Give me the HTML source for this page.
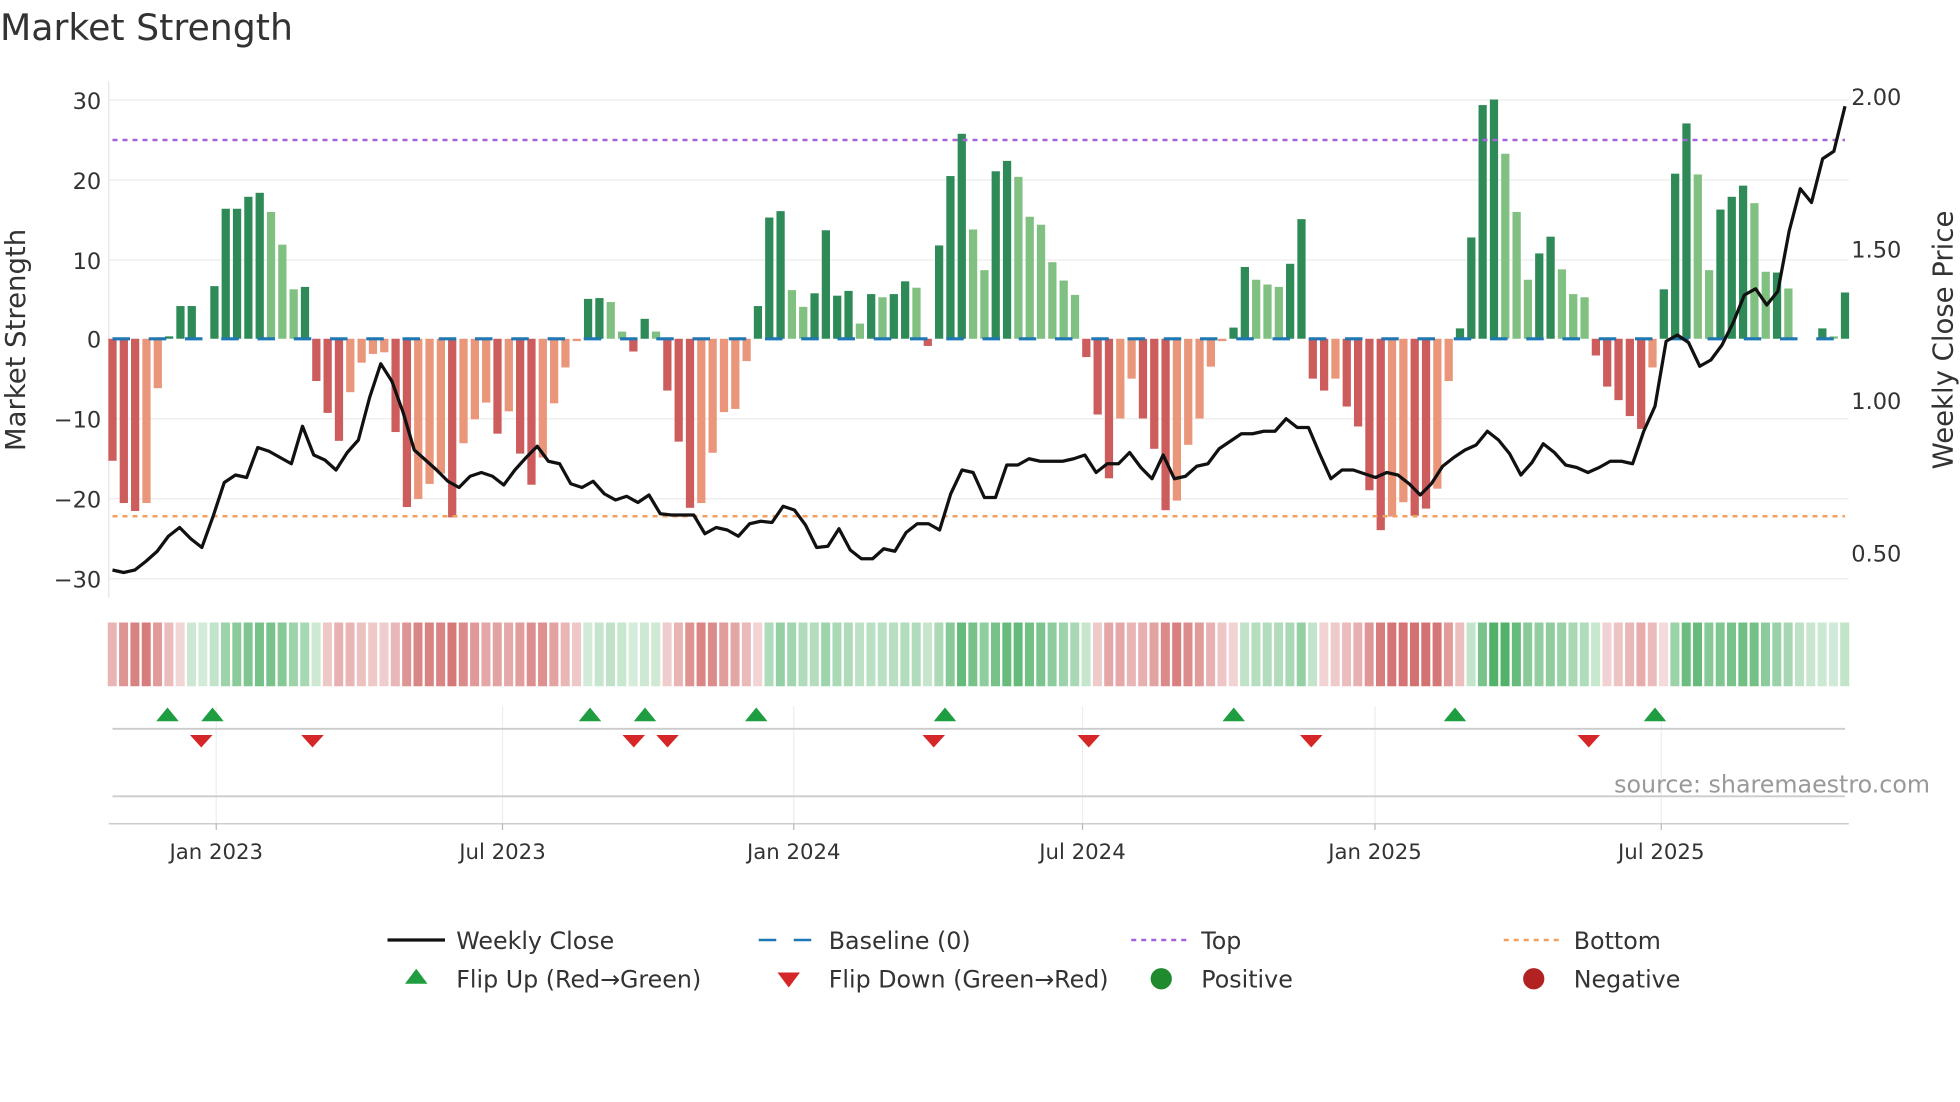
<!DOCTYPE html>
<html><head><meta charset="utf-8"><style>
html,body{margin:0;padding:0;background:#fff}
svg{display:block}
text{font-family:"DejaVu Sans","Liberation Sans",sans-serif;fill:#333}
</style></head><body>
<svg id="s" width="1960" height="1102" viewBox="0 0 1568 881.6" xmlns="http://www.w3.org/2000/svg">
<rect width="1568" height="882" fill="#fff"/>
<text x="0" y="32" font-size="29">Market Strength</text>
<g stroke="#ececec" stroke-width="1">
<line x1="87" y1="80" x2="1479" y2="80"/><line x1="87" y1="144" x2="1479" y2="144"/><line x1="87" y1="208" x2="1479" y2="208"/><line x1="87" y1="335" x2="1479" y2="335"/><line x1="87" y1="399" x2="1479" y2="399"/><line x1="87" y1="463" x2="1479" y2="463"/>
</g>
<line x1="87" y1="65" x2="87" y2="478" stroke="#e4e4e4"/>
<g font-size="18" text-anchor="end">
<text x="81" y="87">30</text><text x="81" y="151">20</text><text x="81" y="215">10</text><text x="81" y="278">0</text><text x="81" y="342">−10</text><text x="81" y="406">−20</text><text x="81" y="470">−30</text>
</g>
<g font-size="18">
<text x="1481" y="84">2.00</text><text x="1481" y="206">1.50</text><text x="1481" y="327">1.00</text><text x="1481" y="449">0.50</text>
</g>
<text transform="translate(20,272) rotate(-90)" font-size="22" text-anchor="middle">Market Strength</text>
<text transform="translate(1562,272) rotate(-90)" font-size="22" text-anchor="middle">Weekly Close Price</text>
<g id="bars"></g>
<line x1="90" y1="271" x2="1476" y2="271" stroke="#1f77b4" stroke-width="2.5" stroke-dasharray="14,15"/>
<line x1="90" y1="112" x2="1476" y2="112" stroke="#a463d8" stroke-width="2" stroke-dasharray="4,4"/>
<line x1="90" y1="413" x2="1476" y2="413" stroke="#f0a060" stroke-width="2" stroke-dasharray="4,4"/>
<polyline id="price" fill="none" stroke="#111" stroke-width="2.6" stroke-linejoin="round"/>
<g id="strip"></g>
<g stroke="#eee"><line x1="173" y1="565" x2="173" y2="660"/><line x1="402" y1="565" x2="402" y2="660"/><line x1="635" y1="565" x2="635" y2="660"/><line x1="866" y1="565" x2="866" y2="660"/><line x1="1100" y1="565" x2="1100" y2="660"/><line x1="1329" y1="565" x2="1329" y2="660"/></g>
<line x1="90" y1="583" x2="1476" y2="583" stroke="#ccc" stroke-width="1.5"/>
<line x1="90" y1="637" x2="1476" y2="637" stroke="#ccc" stroke-width="1.5"/>
<line x1="87" y1="659" x2="1479" y2="659" stroke="#ccc" stroke-width="1.2"/>
<g id="marks"></g>
<text x="1544" y="634" font-size="19" text-anchor="end" style="fill:#999">source: sharemaestro.com</text>
<g font-size="17" text-anchor="middle">
<text x="173" y="687">Jan 2023</text><text x="402" y="687">Jul 2023</text><text x="635" y="687">Jan 2024</text><text x="866" y="687">Jul 2024</text><text x="1100" y="687">Jan 2025</text><text x="1329" y="687">Jul 2025</text>
</g>
<g stroke="#bbb"><line x1="173" y1="659" x2="173" y2="664"/><line x1="402" y1="659" x2="402" y2="664"/><line x1="635" y1="659" x2="635" y2="664"/><line x1="866" y1="659" x2="866" y2="664"/><line x1="1100" y1="659" x2="1100" y2="664"/><line x1="1329" y1="659" x2="1329" y2="664"/></g>
<g font-size="19">
<line x1="310" y1="752" x2="356" y2="752" stroke="#111" stroke-width="2.6"/><text x="365" y="759">Weekly Close</text>
<line x1="607" y1="752" x2="651" y2="752" stroke="#1f77b4" stroke-width="2" stroke-dasharray="14,14"/><text x="663" y="759">Baseline (0)</text>
<line x1="905" y1="752" x2="949" y2="752" stroke="#a463d8" stroke-width="2" stroke-dasharray="4,4"/><text x="961" y="759">Top</text>
<line x1="1203" y1="752" x2="1247" y2="752" stroke="#f0a060" stroke-width="2" stroke-dasharray="4,4"/><text x="1259" y="759">Bottom</text>
<polygon points="333,775 342,787 324,787" fill="#1e9e40"/><text x="365" y="790">Flip Up (Red→Green)</text>
<polygon points="622,778 640,778 631,790" fill="#d62728"/><text x="663" y="790">Flip Down (Green→Red)</text>
<circle cx="929" cy="783" r="8.5" fill="#1f8a2e"/><text x="961" y="790">Positive</text>
<circle cx="1227" cy="783" r="8.5" fill="#b22222"/><text x="1259" y="790">Negative</text>
</g>
</svg>
<script>
var V="-15.3d -20.6d -21.6d -20.6l -6.2l 0.3d 4.1d 4.1d 0d 6.6d 16.3d 16.3d 17.8d 18.3d 15.9l 11.8l 6.2l 6.5d -5.3d -9.3d -12.8d -6.7l -3l -1.9l -1.7l -11.7d -21.1d -20.1l -18.2l -16.9l -22.4d -13.1l -10.1l -8l -11.9d -9.1l -14.4d -18.3d -14.9l -8.1l -3.6l -0.3l 5d 5.1d 4.6l 0.9l -1.6d 2.5d 0.9l -6.5d -12.9d -21.2d -20.6l -14.3l -9.2l -8.8l -2.8l 4.1d 15.2d 16d 6.1l 4l 5.7d 13.6d 5.4d 6d 1.9l 5.6d 5.2l 5.6d 7.2d 6.4l -0.9d 11.7d 20.4d 25.7d 13.7l 8.6l 21d 22.3d 20.3l 15.3l 14.3l 9.6l 7.3l 5.5l -2.3d -9.5d -17.5d -10l -5l -10d -13.8d -21.5d -20.3l -13.3l -10l -3.5l -0.3l 1.4d 9d 7.4l 6.8l 6.5l 9.4d 15d -5d -6.5d -5l -8.5d -11d -19d -24d -22.3l -20.5l -22.2d -21.3d -18.8l -5.3l 1.3d 12.7d 29.3d 30d 23.2l 15.9l 7.4l 10.7d 12.8d 8.7l 5.6l 5.2l -2.1d -6d -7.7d -9.7d -11.3d -3.6l 6.2d 20.7d 27d 20.6l 8.6l 16.2d 17.8d 19.2d 17l 8.4l 8.3d 6.3l 0d 0d 1.3d 0.3l 5.8d".split(" ");
var NS="http://www.w3.org/2000/svg",n=V.length,sp=(1476-90)/(n-1),b=document.getElementById("bars"),st=document.getElementById("strip");
function el(t,a,p){var e=document.createElementNS(NS,t);for(var k in a)e.setAttribute(k,a[k]);p.appendChild(e);return e}
var sm=0;
for(var i=0;i<n;i++){var v=parseFloat(V[i]),d=V[i].slice(-1)=="d",x=90+i*sp,y=271-v*6.38;
var c=v>=0?(d?"#2e8b57":"#80c080"):(d?"#cd5c5c":"#e9967a");
if(v!=0)el("rect",{x:x-3.3,y:Math.min(y,271),width:6.6,height:Math.abs(v*6.38),fill:c},b);
sm=sm*0.5+v*0.5;var a=0.2+0.65*Math.min(Math.abs(sm)/24,1);
el("rect",{x:x-3.8,y:498,width:7.2,height:51,fill:sm>=0?"#2ea24a":"#c84848","fill-opacity":a},st);}
var P=[456,458,456,449,441,429,422,431,438,413,386,380,382,358,361,366,371,341,364,368,376,362,352,318,291,305,330,360,368,376,385,390,381,378,381,388,376,366,357,369,371,387,390,385,395,400,397,402,396,411,412,412,412,427,422,424,429,419,417,418,405,408,420,438,437,423,440,447,447,439,441,426,419,419,424,395,376,378,398,398,372,372,367,369,369,369,367,364,378,371,371,362,374,383,364,383,381,373,371,359,353,347,347,345,345,335,342,342,363,383,376,376,379,382,378,380,387,396,387,373,366,360,356,345,352,363,380,370,355,362,372,374,378,374,369,369,371,345,325,273,268,274,293,288,276,258,236,231,244,233,185,151,162,127,121,85];
var ps=(1476-90)/(P.length-1),pts=[];for(var j=0;j<P.length;j++)pts.push((90+j*ps).toFixed(1)+","+P[j]);
document.getElementById("price").setAttribute("points",pts.join(" "));
var m=document.getElementById("marks");
[134,170,472,516,605,756,987,1164,1324].forEach(function(x){el("polygon",{points:(x)+",566 "+(x+9)+",577 "+(x-9)+",577",fill:"#1e9e40"},m)});
[161,250,507,534,747,871,1049,1271].forEach(function(x){el("polygon",{points:(x-9)+",588 "+(x+9)+",588 "+x+",598",fill:"#d62728"},m)});
</script>
</body></html>
